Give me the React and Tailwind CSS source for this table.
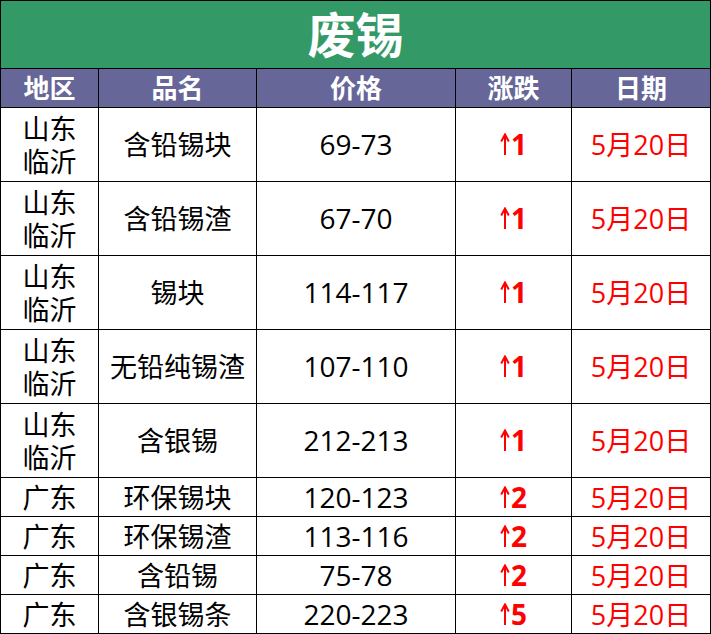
import React from "react";

const rows = [
  { region: ["山东", "临沂"], name: "含铅锡块", price: "69-73", change: "1" },
  { region: ["山东", "临沂"], name: "含铅锡渣", price: "67-70", change: "1" },
  { region: ["山东", "临沂"], name: "锡块", price: "114-117", change: "1" },
  { region: ["山东", "临沂"], name: "无铅纯锡渣", price: "107-110", change: "1" },
  { region: ["山东", "临沂"], name: "含银锡", price: "212-213", change: "1" },
  { region: ["广东"], name: "环保锡块", price: "120-123", change: "2" },
  { region: ["广东"], name: "环保锡渣", price: "113-116", change: "2" },
  { region: ["广东"], name: "含铅锡", price: "75-78", change: "2" },
  { region: ["广东"], name: "含银锡条", price: "220-223", change: "5" },
];

const font = { fontFamily: '"Open Sans", "Noto Sans CJK SC", sans-serif' };

const UpArrow = () => (
  <svg width="10" height="22" viewBox="0 0 10 22" className="mr-px mb-[1px]">
    <path d="M5 2 V22 M1.2 8.5 L5 1.5 L8.8 8.5" fill="none" stroke="#ff0000" strokeWidth="2" />
  </svg>
);

export default function App() {
  return (
    <div className="w-[711px] h-[634px] bg-white" style={font}>
      <div className="grid grid-cols-[97px_157px_198px_115px_138px] gap-px bg-black p-px w-[711px]">
        <div className="col-span-5 h-[67px] bg-[#339966] flex items-center justify-center text-white text-[48px] font-bold leading-none">
          废锡
        </div>
        {["地区", "品名", "价格", "涨跌", "日期"].map((h) => (
          <div
            key={h}
            className="h-[38px] bg-[#666699] flex items-center justify-center text-white text-[26px] font-bold leading-none"
          >
            {h}
          </div>
        ))}
        {rows.map((r, i) => {
          const tall = r.region.length > 1;
          const cell = `${tall ? "h-[73px]" : "h-[38px]"} bg-white flex items-center justify-center text-[27px] leading-[33px]`;
          return (
            <React.Fragment key={i}>
              <div className={`${cell} flex-col text-black`}>
                {r.region.map((t) => (
                  <span key={t}>{t}</span>
                ))}
              </div>
              <div className={`${cell} text-black`}>{r.name}</div>
              <div className={`${cell} text-black text-[28px]`}>{r.price}</div>
              <div className={`${cell} text-[#ff0000]`}>
                <UpArrow />
                <span className="font-bold text-[28px]">{r.change}</span>
              </div>
              <div className={`${cell} text-[#ff0000]`}>5月20日</div>
            </React.Fragment>
          );
        })}
      </div>
    </div>
  );
}
